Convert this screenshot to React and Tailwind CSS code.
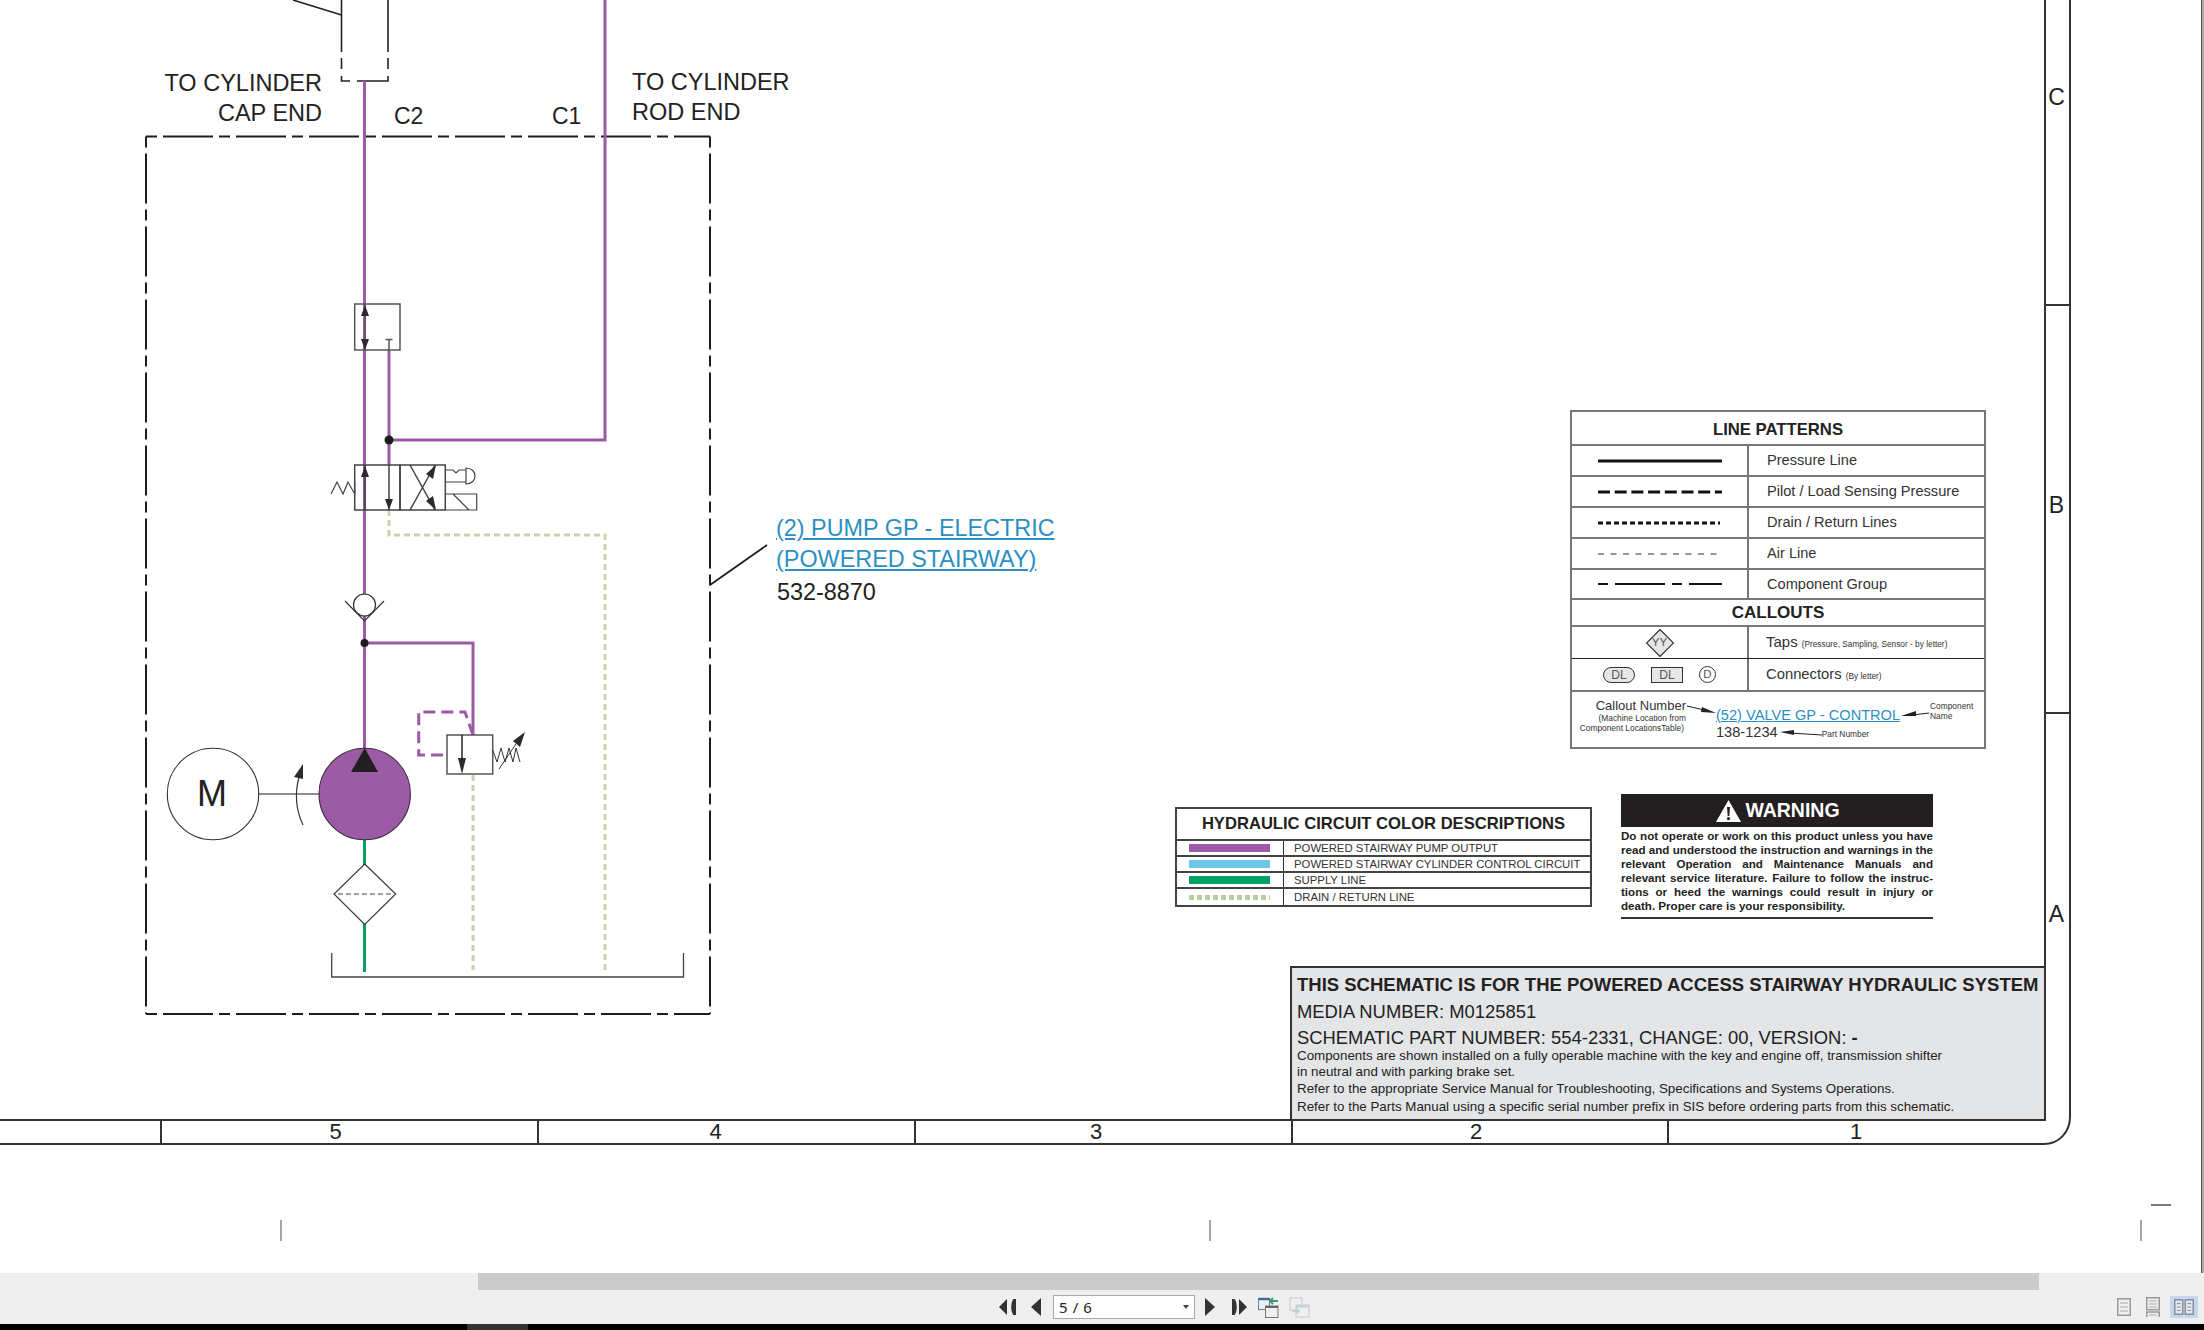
import React from "react";

const P = "#9b5ba5";
const G = "#00a261";
const D = "#c6d3ab";
const K = "#2b2b2b";

const up = (x, y, w = 4, h = 11) => `${x},${y} ${x - w},${y + h} ${x + w},${y + h}`;
const down = (x, y, w = 4, h = 11) => `${x},${y} ${x - w},${y - h} ${x + w},${y - h}`;

function Schematic() {
  return (
    <svg width="2204" height="1273" viewBox="0 0 2204 1273" fill="none" className="block">
      {/* cylinder stub above the group */}
      <g stroke="#222" strokeWidth="1.6">
        <path d="M293 0L341.5 15" />
        <path d="M341.5 0V52M388 0V52M341.5 58V69M388 58V69" />
        <path d="M341.5 76V81H350M357 81H388V76" />
      </g>

      {/* component group */}
      <g stroke="#1d1d1d" strokeWidth="2" strokeDasharray="50 6 11 6" strokeDashoffset="56">
        <path d="M146 136.5H710" />
        <path d="M146 1014H710" />
        <path d="M146 136.5V1014" />
        <path d="M710 136.5V1014" />
      </g>

      {/* purple lines */}
      <g stroke={P} strokeWidth="3">
        <path d="M364.5 81V750" />
        <path d="M605 0V440H389V465" />
        <path d="M389 350V440" />
        <path d="M364.5 643H473V735" />
        <path d="M473 735L465 712H418.7V755H447" strokeDasharray="12 6" />
      </g>

      {/* drain lines */}
      <g stroke={D} strokeWidth="3" strokeDasharray="6 4">
        <path d="M389 510V535H605V970" />
        <path d="M473 775V970" />
      </g>

      {/* supply */}
      <g stroke={G} strokeWidth="3">
        <path d="M364.5 840V865M364.5 924V972" />
      </g>

      {/* shuttle block */}
      <g stroke="#555" strokeWidth="1.5">
        <rect x="354.7" y="304" width="45.3" height="46" />
        <path d="M365 304V350" />
        <path d="M389 340V350M385.5 339.5H392.5" />
      </g>
      <polygon points={up(365, 305)} fill={K} />
      <polygon points={down(365, 350)} fill={K} />

      {/* directional valve */}
      <g stroke="#444" strokeWidth="1.5">
        <rect x="354.7" y="465" width="45.3" height="45" />
        <rect x="400" y="465" width="45.3" height="45" />
        <path d="M365 465V510M389 465V510" />
        <path d="M410 510L435 465M410 465L435 510" />
        <path d="M445.3 494H476.7V510H445.3M453 494L469 510" strokeWidth="1.2" />
        <path d="M445.3 470H453L456 473L459 470H466M445.3 482H466" strokeWidth="1.2" />
        <path d="M466 468C478 468 478 484 466 484Z" strokeWidth="1.2" fill="#fff" />
        <path d="M331 494L337 482L343 494L348 482L354.7 494V482" strokeWidth="1.2" />
      </g>
      <polygon points={up(365, 466)} fill={K} />
      <polygon points={down(389, 510)} fill={K} />
      <polygon points="436,465 426,474 433,479" fill={K} />
      <polygon points="436,510 426,501 433,496" fill={K} />

      {/* check valve */}
      <circle cx="364.5" cy="605" r="11" fill="#fff" stroke="#333" strokeWidth="1.2" />
      <path d="M345 601L364.5 621L384 601" stroke="#333" strokeWidth="1.2" />
      <circle cx="389" cy="440" r="4.5" fill="#1d1d1d" />
      <circle cx="364.5" cy="643" r="4" fill="#1d1d1d" />

      {/* relief valve */}
      <rect x="447" y="735" width="45.7" height="39" fill="#fff" stroke="#555" strokeWidth="1.5" />
      <path d="M462 735V762" stroke="#222" strokeWidth="1.5" />
      <polygon points={down(462, 774, 4, 16)} fill={K} />
      <path d="M492.7 750L497 762L501 748L505 762L509 748L513 762L516 748L520 762" stroke="#333" strokeWidth="1" />
      <path d="M499 769L518 741" stroke="#333" strokeWidth="1" />
      <polygon points="525,732 513,741 520,747" fill={K} />

      {/* motor and pump */}
      <circle cx="213" cy="794" r="45.7" fill="#fff" stroke="#333" strokeWidth="1.1" />
      <path d="M259 794H319" stroke="#222" strokeWidth="1.2" />
      <circle cx="364.7" cy="794" r="45.7" fill={P} stroke="#3a2a3c" strokeWidth="1.1" />
      <polygon points="364.7,748 351,772 378,772" fill="#231f20" />
      <path d="M303 825C295 808 295 792 299 777" stroke="#333" strokeWidth="1.2" />
      <polygon points="303,764 294,777 303,779" fill={K} />

      {/* filter */}
      <polygon points="364.7,864 395.7,894 364.7,924.5 334,894" fill="#fff" stroke="#333" strokeWidth="1.1" />
      <path d="M338 894H392" stroke="#444" strokeWidth="1" strokeDasharray="5 3" />

      {/* tank */}
      <path d="M331.7 953V977H683.5V953" stroke="#444" strokeWidth="1.3" />

      {/* callout leader */}
      <path d="M710 585L767 545" stroke="#1d1d1d" strokeWidth="1.8" />

      {/* sheet frame */}
      <path d="M2045 1120V0M2070 0V1117C2070 1132 2059 1144 2044 1144" stroke="#333" strokeWidth="2" />
      <path d="M2045 305H2070M2045 713H2070" stroke="#333" strokeWidth="2" />

      {/* crop marks */}
      <path d="M281 1220V1241M1210 1220V1241M2141 1220V1241" stroke="#888" strokeWidth="1.5" />
      <path d="M2151 1205H2171" stroke="#222" strokeWidth="1.2" />
    </svg>
  );
}

function Sample({ children }) {
  return (
    <svg width="124" height="6" viewBox="0 0 124 6" fill="none" className="block">
      {children}
    </svg>
  );
}

function PatternRow({ label, sample, h = "h-[31px]" }) {
  return (
    <div className={`flex ${h} border-b-2 border-[#777]`}>
      <div className="w-[177px] shrink-0 flex items-center pl-[26px] border-r-2 border-[#777]">{sample}</div>
      <div className="flex-1 flex items-center pl-[18px] pt-[1px] text-[14.6px] text-[#333] whitespace-nowrap">{label}</div>
    </div>
  );
}

function Legend() {
  return (
    <div className="absolute left-[1570px] top-[410px] w-[416px] border-2 border-[#777] text-[#222]">
      <div className="h-[34px] pt-[3px] flex items-center justify-center font-bold text-[16.7px] border-b-2 border-[#777]">LINE PATTERNS</div>
      <PatternRow
        label="Pressure Line"
        sample={<Sample><path d="M0 3H124" stroke="#111" strokeWidth="3" /></Sample>}
      />
      <PatternRow
        label="Pilot / Load Sensing Pressure"
        sample={<Sample><path d="M0 3H124" stroke="#111" strokeWidth="3" strokeDasharray="12 4.7" /></Sample>}
      />
      <PatternRow
        label="Drain / Return Lines"
        sample={<Sample><path d="M0 3H122" stroke="#111" strokeWidth="3" strokeDasharray="5 3" /></Sample>}
      />
      <PatternRow
        label="Air Line"
        sample={<Sample><path d="M0 3H124" stroke="#333" strokeWidth="1.2" strokeDasharray="6 6.5" /></Sample>}
      />
      <PatternRow
        label="Component Group"
        h="h-[30px]"
        sample={<Sample><path d="M0 3H10M17 3H67M74 3H84M91 3H124" stroke="#111" strokeWidth="2" /></Sample>}
      />
      <div className="h-[27px] pt-[1px] flex items-center justify-center font-bold text-[17px] border-b-2 border-[#777]">CALLOUTS</div>
      <div className="flex h-[32px] border-b border-[#222]">
        <div className="w-[177px] shrink-0 flex items-center justify-center border-r-2 border-[#777]">
          <span className="relative flex items-center justify-center w-[28px] h-[28px]">
            <svg width="28" height="28" viewBox="0 0 28 28" className="block">
              <polygon points="14,0.5 27.5,14 14,27.5 0.5,14" fill="#e6e6e6" stroke="#333" strokeWidth="1.2" />
            </svg>
            <span className="absolute text-[11.5px] text-[#555]">YY</span>
          </span>
        </div>
        <div className="flex-1 flex items-center pl-[17px] gap-[4px] whitespace-nowrap text-[#333]">
          <span className="text-[15px]">Taps</span>
          <span className="text-[8.3px] mt-[3px]">(Pressure, Sampling, Sensor - by letter)</span>
        </div>
      </div>
      <div className="flex h-[33px] border-b-2 border-[#777]">
        <div className="w-[177px] shrink-0 flex items-center pl-[31px] border-r-2 border-[#777]">
          <span className="w-[32px] h-[16px] flex items-center justify-center rounded-full border border-[#333] bg-[#e6e6e6] text-[12px] text-[#555]">DL</span>
          <span className="ml-[16px] w-[32px] h-[16px] flex items-center justify-center border border-[#333] bg-[#e6e6e6] text-[12px] text-[#555]">DL</span>
          <span className="ml-[16px] w-[17px] h-[17px] flex items-center justify-center rounded-full border border-[#333] text-[11.5px] text-[#555]">D</span>
        </div>
        <div className="flex-1 flex items-center pl-[17px] gap-[4px] whitespace-nowrap text-[#333]">
          <span className="text-[14.8px]">Connectors</span>
          <span className="text-[8.3px] mt-[3px]">(By letter)</span>
        </div>
      </div>
      <div className="relative flex h-[55px] whitespace-nowrap text-[#333]">
        <div className="w-[114px] shrink-0 pt-[7px] text-right">
          <div className="text-[13px] leading-[14px]">Callout Number</div>
          <div className="text-[8.4px] leading-[10px]">(Machine Location from</div>
          <div className="text-[8.4px] leading-[10px] pr-[2px]">Component LocationsTable)</div>
        </div>
        <div className="ml-[30px] w-[214px] shrink-0 pt-[15px] text-[14.6px] leading-[16px]">
          <div className="text-[#2b8fc3] underline">(52) VALVE GP - CONTROL</div>
          <div className="mt-[1px] flex">
            <span>138-1234</span>
            <span className="ml-[44px] text-[8.4px] pt-[2px]">Part Number</span>
          </div>
        </div>
        <div className="pt-[9px] text-[8.4px] leading-[10px]">
          <div>Component</div>
          <div>Name</div>
        </div>
        <svg width="415" height="55" viewBox="0 0 415 55" fill="none" className="absolute left-0 top-0">
          <path d="M115 14L132 18M357 21L340 23M250 43L218 41" stroke="#222" strokeWidth="1" />
          <polygon points="144,21 130,15 129,20" fill="#222" />
          <polygon points="329,24 344,19 344,24" fill="#222" />
          <polygon points="208,40 222,38 222,43" fill="#222" />
        </svg>
      </div>
    </div>
  );
}

function ColorRow({ label, className, dotted, last }) {
  return (
    <div className={`flex h-[16px] ${last ? "" : "border-b-2 border-[#444]"}`}>
      <div className="w-[107px] shrink-0 flex items-center pl-[12px] border-r border-[#333]">
        {dotted ? (
          <span className="w-[81px] h-[5px] bg-[repeating-linear-gradient(90deg,#b6d09d_0,#b6d09d_5px,transparent_5px,transparent_8px)]" />
        ) : (
          <span className={`w-[81px] h-[8px] ${className}`} />
        )}
      </div>
      <div className="flex-1 flex items-center pl-[10px] text-[11.35px] text-[#333] whitespace-nowrap">{label}</div>
    </div>
  );
}

function ColorTable() {
  return (
    <div className="absolute left-[1175px] top-[807px] w-[417px] border-2 border-[#444]">
      <div className="h-[32px] pt-[1px] flex items-center justify-center font-bold text-[16.6px] text-[#222] border-b-2 border-[#444]">
        HYDRAULIC CIRCUIT COLOR DESCRIPTIONS
      </div>
      <ColorRow label="POWERED STAIRWAY PUMP OUTPUT" className="bg-[#9b5ba5]" />
      <ColorRow label="POWERED STAIRWAY CYLINDER CONTROL CIRCUIT" className="bg-[#6bc8e8]" />
      <ColorRow label="SUPPLY LINE" className="bg-[#00a261]" />
      <ColorRow label="DRAIN / RETURN LINE" dotted last />
    </div>
  );
}

const warningLines = [
  "Do not operate or work on this product unless you have",
  "read and understood the instruction and warnings in the",
  "relevant Operation and Maintenance Manuals and",
  "relevant service literature. Failure to follow the instruc-",
  "tions or heed the warnings could result in injury or",
];

function Warning() {
  return (
    <div className="absolute left-[1621px] top-[794px] w-[312px] text-[#222]">
      <div className="h-[33px] bg-[#231f20] flex items-center justify-center gap-[4px] text-white font-bold text-[19.5px] pl-[2px]">
        <svg width="25" height="22" viewBox="0 0 25 22" className="block">
          <polygon points="12.5,0 25,22 0,22" fill="#fff" />
          <polygon points="11,7 14,7 13.3,16 11.7,16" fill="#231f20" />
          <circle cx="12.5" cy="18.6" r="1.6" fill="#231f20" />
        </svg>
        <span>WARNING</span>
      </div>
      <div className="pt-[2px] pb-[4px] border-b-2 border-[#333] text-[11.6px] leading-[14px] font-bold">
        {warningLines.map((l) => (
          <div key={l} className="text-justify [text-align-last:justify] whitespace-nowrap">{l}</div>
        ))}
        <div>death. Proper care is your responsibility.</div>
      </div>
    </div>
  );
}

function TitleBlock() {
  return (
    <div className="absolute left-[1290px] top-[966px] w-[756px] h-[155px] border-2 border-[#333] bg-[#e4e5e7] pl-[5px] pt-[6px] text-[#222] whitespace-nowrap">
      <div className="font-bold text-[18.5px] leading-[22px]">THIS SCHEMATIC IS FOR THE POWERED ACCESS STAIRWAY HYDRAULIC SYSTEM</div>
      <div className="text-[18.4px] leading-[22px] mt-[5px]">MEDIA NUMBER: M0125851</div>
      <div className="text-[18.4px] leading-[22px] mt-[4px]">
        SCHEMATIC PART NUMBER: 554-2331, CHANGE: 00, VERSION: <span className="font-bold">-</span>
      </div>
      <div className="text-[13.35px] leading-[16px] mt-[-1px]">
        Components are shown installed on a fully operable machine with the key and engine off, transmission shifter
      </div>
      <div className="text-[13.35px] leading-[15px]">in neutral and with parking brake set.</div>
      <div className="text-[13.35px] leading-[18px] mt-[1px]">Refer to the appropriate Service Manual for Troubleshooting, Specifications and Systems Operations.</div>
      <div className="text-[13.35px] leading-[18px]">Refer to the Parts Manual using a specific serial number prefix in SIS before ordering parts from this schematic.</div>
    </div>
  );
}

function ZoneStrip() {
  const cells = [
    ["", "w-[160px]", ""],
    ["5", "w-[377px]", "pr-[28px]"],
    ["4", "w-[377px]", "pr-[22px]"],
    ["3", "w-[377px]", "pr-[15px]"],
    ["2", "w-[376px]", "pr-[8px]"],
    ["1", "w-[378px]", "pr-[2px]"],
  ];
  return (
    <div className="absolute left-0 top-[1119px] w-[2045px] h-[26px] flex border-y-2 border-[#333] text-[22px] leading-[22px] text-[#222]">
      {cells.map(([t, w, p], i) => (
        <div key={i} className={`${w} ${p} shrink-0 flex items-center justify-center ${i > 0 ? "border-l-2 border-[#333]" : ""}`}>
          {t}
        </div>
      ))}
    </div>
  );
}

function ZoneLetters() {
  return (
    <div className="absolute left-[2045px] top-0 w-[23px] flex flex-col text-[23px] leading-[24px] text-[#222] text-center">
      <div className="h-[305px] pt-[85px]">C</div>
      <div className="h-[408px] pt-[188px]">B</div>
      <div className="h-[404px] pt-[189px]">A</div>
    </div>
  );
}

function Labels() {
  return (
    <>
      <div className="absolute left-[147px] top-[68px] w-[175px] text-right text-[23.5px] leading-[30px] text-[#222]">
        <div>TO CYLINDER</div>
        <div>CAP END</div>
      </div>
      <div className="absolute left-[632px] top-[67px] text-[23.5px] leading-[30px] text-[#222]">
        <div>TO CYLINDER</div>
        <div>ROD END</div>
      </div>
      <div className="absolute left-[394px] top-[101px] text-[23px] leading-[30px] text-[#222]">C2</div>
      <div className="absolute left-[552px] top-[101px] text-[23px] leading-[30px] text-[#222]">C1</div>
      <div className="absolute left-[189px] top-[773px] w-[46px] text-center text-[36px] leading-[42px] text-[#222]">M</div>
      <div className="absolute left-[776px] top-[513px] text-[23.4px] leading-[30.5px] whitespace-nowrap">
        <div className="text-[#2b8fc3] underline">(2) PUMP GP - ELECTRIC</div>
        <div className="text-[#2b8fc3] underline">(POWERED STAIRWAY)</div>
        <div className="text-[#222] mt-[3px] ml-[1px]">532-8870</div>
      </div>
    </>
  );
}

function Tri({ dir }) {
  return (
    <svg width="10" height="18" viewBox="0 0 10 18" className="block">
      <polygon points={dir === "l" ? "0,9 10,0 10,18" : "0,0 10,9 0,18"} fill="#333" />
    </svg>
  );
}

function First() {
  return (
    <svg width="17" height="18" viewBox="0 0 17 18" className="block">
      <polygon points="0,9 8,1 8,17" fill="#333" />
      <path d="M17 1V17H14.5C11.5 14 11.5 4 14.5 1Z" fill="#333" />
    </svg>
  );
}

function Last() {
  return (
    <svg width="15" height="18" viewBox="0 0 15 18" className="block">
      <path d="M0 1V17H2.5C5.5 14 5.5 4 2.5 1Z" fill="#333" />
      <polygon points="15,9 7,1 7,17" fill="#333" />
    </svg>
  );
}

function PageIcon({ faded }) {
  const a = faded ? "#c2c8cc" : "#5f7e9e";
  const b = faded ? "#c8cccc" : "#777";
  const c = faded ? "#bcd4c4" : "#3f9a78";
  return (
    <svg width="21" height="21" viewBox="0 0 21 21" fill="none" className="block">
      {faded ? (
        <>
          <rect x="1" y="1" width="12" height="12" stroke={a} />
          <rect x="7" y="8" width="13" height="12" fill="#efefef" stroke={b} />
          <path d="M7 9.5H20" stroke="#bcd0e0" strokeWidth="2" />
          <path d="M3 14H10M7.5 11.5L10 14L7.5 16.5" stroke={c} strokeWidth="1.5" />
        </>
      ) : (
        <>
          <rect x="0.5" y="1.5" width="11" height="11" stroke={a} />
          <path d="M0.5 2H11.5" stroke="#3f6ea0" strokeWidth="2.5" />
          <rect x="7.5" y="9" width="12.5" height="11.5" fill="#efefef" stroke={b} />
          <path d="M7.5 10H20" stroke="#666" strokeWidth="2" />
          <path d="M20 4H12M15 1L12 4L15 7" stroke={c} strokeWidth="2" />
        </>
      )}
    </svg>
  );
}

function ViewIcon({ kind }) {
  if (kind === "single") {
    return (
      <svg width="14" height="18" viewBox="0 0 14 18" fill="none" className="block">
        <rect x="0.75" y="0.75" width="12.5" height="16.5" stroke="#999" strokeWidth="1.5" />
        <path d="M3 5H11M3 9H11M3 13H11" stroke="#aaa" />
      </svg>
    );
  }
  if (kind === "continuous") {
    return (
      <svg width="14" height="20" viewBox="0 0 14 20" fill="none" className="block">
        <rect x="0.75" y="0.75" width="12.5" height="12" stroke="#999" strokeWidth="1.5" />
        <path d="M3 4H11M3 7H11M3 10H11" stroke="#aaa" />
        <path d="M0.75 20V15H13.25V20" stroke="#999" strokeWidth="1.5" />
        <path d="M3 18H11" stroke="#aaa" />
      </svg>
    );
  }
  return (
    <svg width="20" height="16" viewBox="0 0 20 16" fill="none" className="block">
      <rect x="0.75" y="0.75" width="8" height="14.5" fill="#dfe7f3" stroke="#8b8f98" strokeWidth="1.5" />
      <rect x="11.25" y="0.75" width="8" height="14.5" fill="#dfe7f3" stroke="#8b8f98" strokeWidth="1.5" />
      <path d="M3 4.5H6.5M3 8H6.5M3 11.5H6.5M13.5 4.5H17M13.5 8H17M13.5 11.5H17" stroke="#8b8f98" />
    </svg>
  );
}

function Toolbar() {
  return (
    <footer className="h-[51px] shrink-0 bg-[#efefef]">
      <div className="h-[17px]">
        <div className="ml-[478px] w-[1561px] h-full bg-[#cbcbcb]" />
      </div>
      <div className="h-[34px] flex items-center pl-[999px]">
        <First />
        <div className="ml-[15px]"><Tri dir="l" /></div>
        <div className="ml-[12px] w-[142px] h-[24px] flex items-center justify-between bg-white border border-[#a9a9a9] pl-[5px] pr-[5px]">
          <span className="font-['Noto_Sans',sans-serif] text-[15px] leading-[20px] tracking-[0.6px] text-[#222]">5 / 6</span>
          <svg width="6" height="4" viewBox="0 0 6 4" className="block"><polygon points="0,0 6,0 3,4" fill="#444" /></svg>
        </div>
        <div className="ml-[10px]"><Tri dir="r" /></div>
        <div className="ml-[17px]"><Last /></div>
        <div className="ml-[11px]"><PageIcon /></div>
        <div className="ml-[10px]"><PageIcon faded /></div>
        <div className="ml-auto mr-[6px] flex items-center">
          <ViewIcon kind="single" />
          <div className="ml-[15px]"><ViewIcon kind="continuous" /></div>
          <div className="ml-[10px] w-[28px] h-[22px] flex items-center justify-center bg-[#c6d7f1]">
            <ViewIcon kind="double" />
          </div>
        </div>
      </div>
    </footer>
  );
}

export default function App() {
  return (
    <div className="w-[2204px] h-[1330px] flex flex-col overflow-hidden bg-white font-['Liberation_Sans',Arial,sans-serif]">
      <main className="relative h-[1273px] shrink-0 overflow-hidden">
        <Schematic />
        <Labels />
        <ZoneLetters />
        <Legend />
        <ColorTable />
        <Warning />
        <ZoneStrip />
        <TitleBlock />
        <div className="absolute right-0 top-0 w-[3px] h-full border-l border-[#555] bg-[#aaa]" />
      </main>
      <Toolbar />
      <div className="h-[6px] shrink-0 bg-black">
        <div className="ml-[467px] w-[61px] h-full bg-[#333]" />
      </div>
    </div>
  );
}
